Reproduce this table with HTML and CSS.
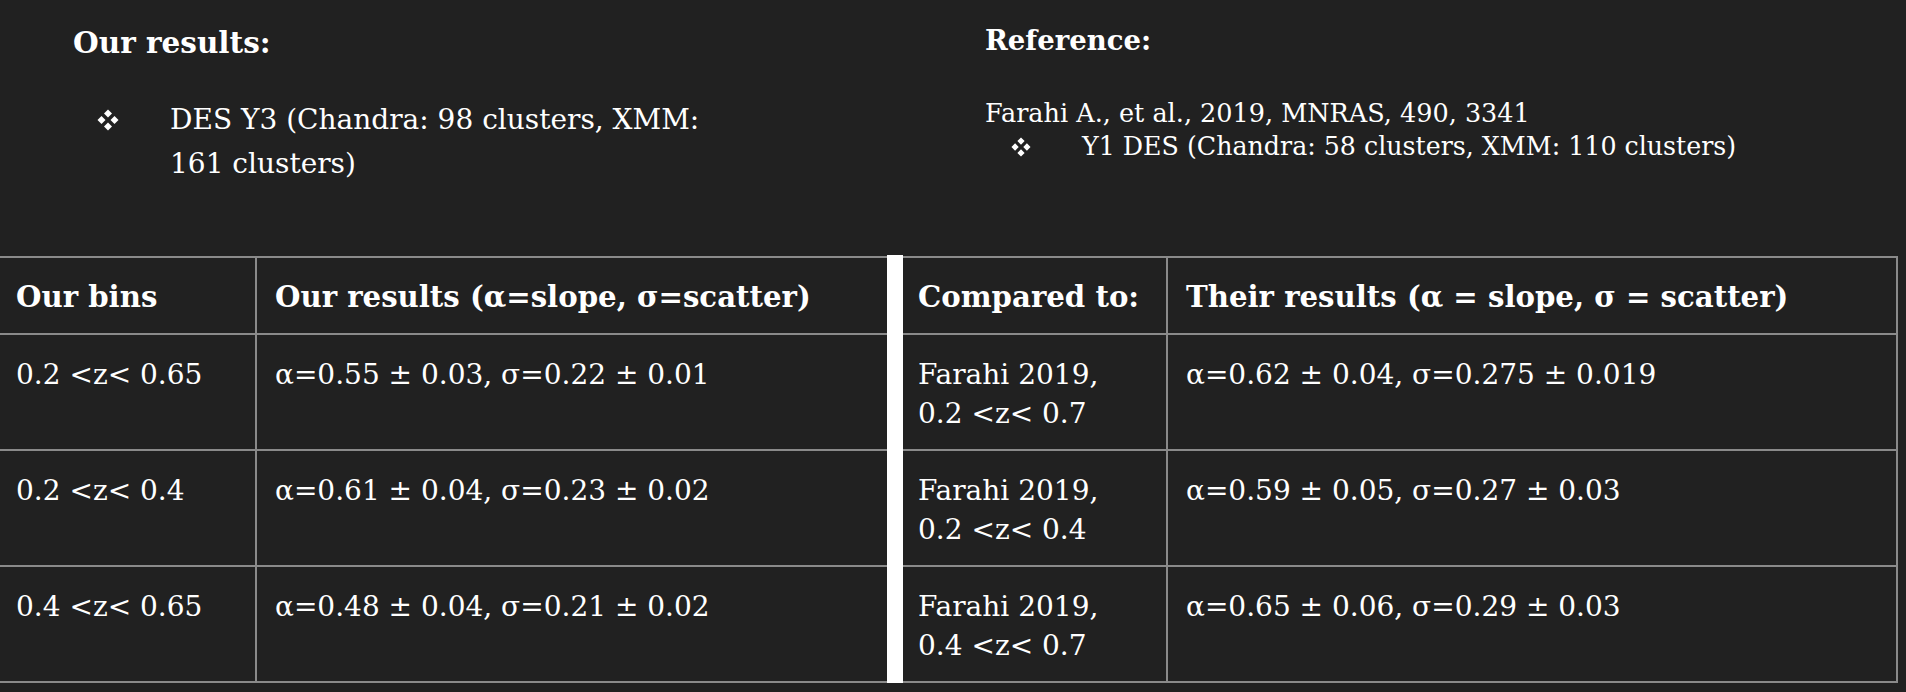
FILE: index.html
```html
<!DOCTYPE html>
<html lang="en">
<head>
<meta charset="utf-8">
<title>Results comparison</title>
<link rel="stylesheet" href="styles.css">
</head>
<body>
<div class="top">
  <section class="col col-left">
    <h2 class="heading heading-ours">Our results:</h2>
    <div class="item item-ours">
      <span class="bullet"><svg width="22" height="22" viewBox="0 0 22 22"><path d="M11 0.5 L15 4.5 L11 8.5 L7 4.5 Z M4.5 7 L8.5 11 L4.5 15 L0.5 11 Z M17.5 7 L21.5 11 L17.5 15 L13.5 11 Z M11 13.5 L15 17.5 L11 21.5 L7 17.5 Z" fill="#fff"/></svg></span>
      <span class="item-text">DES Y3 (Chandra: 98 clusters, XMM: 161 clusters)</span>
    </div>
  </section>
  <section class="col col-right">
    <h2 class="heading heading-ref">Reference:</h2>
    <p class="cite">Farahi A., et al., 2019, MNRAS, 490, 3341</p>
    <div class="item item-ref">
      <span class="bullet"><svg width="20" height="20" viewBox="0 0 22 22"><path d="M11 0.5 L15 4.5 L11 8.5 L7 4.5 Z M4.5 7 L8.5 11 L4.5 15 L0.5 11 Z M17.5 7 L21.5 11 L17.5 15 L13.5 11 Z M11 13.5 L15 17.5 L11 21.5 L7 17.5 Z" fill="#fff"/></svg></span>
      <span class="item-text">Y1 DES (Chandra: 58 clusters, XMM: 110 clusters)</span>
    </div>
  </section>
</div>
<div class="tables">
  <div class="grid grid-ours">
    <div class="cell head c1">Our bins</div>
    <div class="cell head c2">Our results (α=slope, σ=scatter)</div>
    <div class="cell c1">0.2 &lt;z&lt; 0.65</div>
    <div class="cell c2">α=0.55 ± 0.03, σ=0.22 ± 0.01</div>
    <div class="cell c1">0.2 &lt;z&lt; 0.4</div>
    <div class="cell c2">α=0.61 ± 0.04, σ=0.23 ± 0.02</div>
    <div class="cell c1">0.4 &lt;z&lt; 0.65</div>
    <div class="cell c2">α=0.48 ± 0.04, σ=0.21 ± 0.02</div>
  </div>
  <div class="divider"></div>
  <div class="grid grid-theirs">
    <div class="cell head c1">Compared to:</div>
    <div class="cell head c2">Their results (α = slope, σ = scatter)</div>
    <div class="cell c1">Farahi 2019,<br>0.2 &lt;z&lt; 0.7</div>
    <div class="cell c2">α=0.62 ± 0.04, σ=0.275 ± 0.019</div>
    <div class="cell c1">Farahi 2019,<br>0.2 &lt;z&lt; 0.4</div>
    <div class="cell c2">α=0.59 ± 0.05, σ=0.27 ± 0.03</div>
    <div class="cell c1">Farahi 2019,<br>0.4 &lt;z&lt; 0.7</div>
    <div class="cell c2">α=0.65 ± 0.06, σ=0.29 ± 0.03</div>
  </div>
</div>
</body>
</html>
```
FILE: styles.css
```css
html, body {
  margin: 0;
  padding: 0;
  background: #212121;
}
body {
  width: 1906px;
  height: 692px;
  overflow: hidden;
  color: #ffffff;
  font-family: "DejaVu Serif", "Liberation Serif", serif;
}
.top {
  display: flex;
  height: 256px;
}
.col-left {
  width: 985px;
  padding: 26px 0 0 73px;
  box-sizing: border-box;
}
.col-right {
  padding: 23px 0 0 0;
}
.heading {
  margin: 0 0 38px 0;
  font-weight: bold;
  line-height: 34px;
}
.heading-ours {
  font-size: 29.5px;
}
.heading-ref {
  font-size: 27.5px;
  margin-bottom: 39px;
}
.item {
  display: flex;
  align-items: flex-start;
}
.bullet {
  flex: 0 0 auto;
  width: 97px;
  box-sizing: border-box;
  padding-left: 24px;
  display: flex;
  align-items: center;
}
.item-ours {
  font-size: 28px;
  line-height: 44px;
  width: 650px;
}
.item-ours .bullet {
  height: 44px;
}
.cite {
  margin: 0;
  font-size: 25.5px;
  line-height: 34px;
}
.item-ref {
  font-size: 25.3px;
  line-height: 34px;
}
.item-ref .bullet {
  height: 34px;
  padding-left: 26px;
}
.tables {
  display: flex;
  height: 436px;
}
.divider {
  width: 16px;
  height: 428px;
  background: #ffffff;
  margin-top: -1px;
}
.grid {
  display: grid;
  grid-template-rows: 77px 116px 116px 116px;
  border-top: 2px solid #8a8a8a;
  align-self: flex-start;
}
.grid-ours {
  grid-template-columns: 257px 630px;
}
.grid-theirs {
  grid-template-columns: 265px 730px;
}
.cell {
  border-bottom: 2px solid #8a8a8a;
  font-size: 28px;
  line-height: 39px;
  padding: 20px 10px 0 18px;
}
.cell.c1 {
  border-right: 2px solid #8a8a8a;
}
.grid-ours .cell.c1 {
  padding-left: 16px;
}
.grid-theirs .cell.c1 {
  padding-left: 15px;
}
.grid-theirs .cell.c2 {
  border-right: 2px solid #8a8a8a;
}
.cell.head {
  font-weight: bold;
  font-size: 29.2px;
}
```
